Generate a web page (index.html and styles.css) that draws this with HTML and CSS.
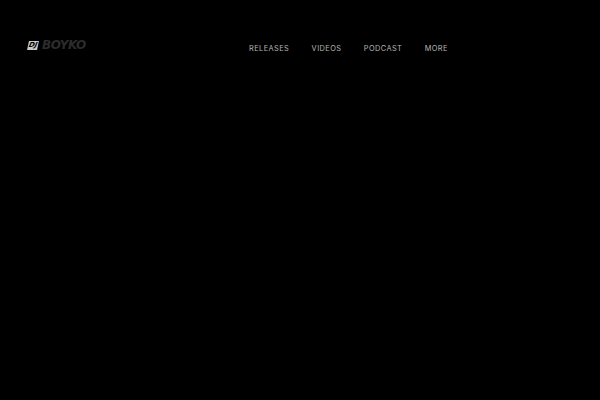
FILE: index.html
```html
<!DOCTYPE html>
<html lang="en">
  <head>
    <meta charset="UTF-8" />
    <meta name="viewport" content="width=device-width, initial-scale=1.0" />
    <title>DJ Boyko</title>
    <link rel="stylesheet" href="styles.css">
  </head>
  <body>
    <header class="header">
      <a class="logo" href="#">
        <span class="logo-dj">DJ</span>
        <span class="logo-name">BOYKO</span>
      </a>
      <nav class="nav">
        <a href="#">RELEASES</a>
        <a href="#">VIDEOS</a>
        <a href="#">PODCAST</a>
        <a href="#">MORE</a>
      </nav>
    </header>
  </body>
</html>
```

FILE: styles.css
```css
html,
body {
  margin: 0;
  height: 100%;
  background-color: #000;
}

body {
  font-family: Inter, "Open Sans", sans-serif;
  overflow: hidden;
}

.header {
  display: flex;
  align-items: flex-start;
  padding: 38px 0 0 28px;
}

.logo {
  display: flex;
  align-items: center;
  width: 221px;
  height: 14px;
  text-decoration: none;
  font-family: "DejaVu Sans", sans-serif;
  font-weight: bold;
  font-style: italic;
}

.logo-dj {
  width: 10px;
  height: 9px;
  background-color: #c8c8c8;
  color: #000;
  font-size: 7px;
  line-height: 9px;
  text-align: center;
  transform: skewX(-12deg);
}

.logo-name {
  margin-left: 4px;
  color: #2c2c2c;
  font-size: 12px;
  letter-spacing: -0.4px;
  line-height: 14px;
}

.nav {
  display: flex;
  gap: 22.4px;
  padding-top: 5px;
}

.nav a {
  color: #b4b4b4;
  font-size: 7.4px;
  letter-spacing: 0.42px;
  line-height: 12px;
  text-decoration: none;
}
```
